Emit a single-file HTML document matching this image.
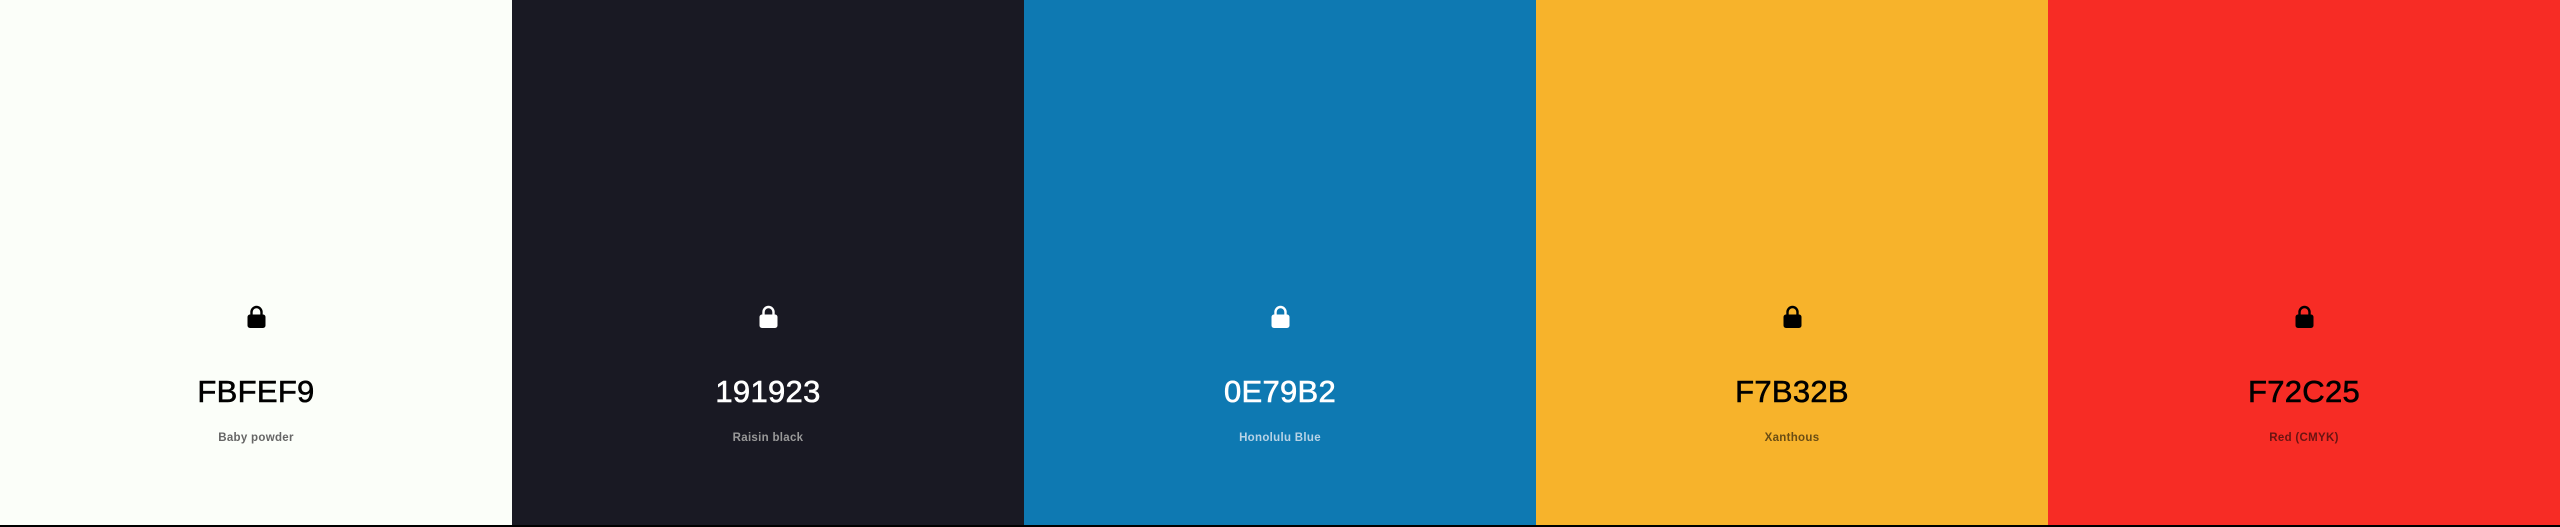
<!DOCTYPE html>
<html><head><style>
html,body{margin:0;padding:0;width:2560px;height:527px;overflow:hidden;background:#000;font-family:"Liberation Sans",sans-serif}
.wrap{display:flex;height:525px}
.c{width:512px;height:525px;position:relative}
.lock{position:absolute;left:246px;top:305px;width:21px;height:24px}
.hex{position:absolute;left:0;right:0;top:374px;text-align:center;font-size:31px;font-weight:normal;letter-spacing:0.3px;-webkit-text-stroke:0.6px currentColor}
.lab{position:absolute;left:0;right:0;top:432px;text-align:center;font-size:11.5px;font-weight:bold;letter-spacing:0.3px}
</style></head><body>
<div class="wrap">
<div class="c" style="background:#FBFEF9;color:#000">
<svg class="lock" viewBox="0 0 21 24"><path d="M5.5 10V7a5 5 0 0 1 10 0v3" fill="none" stroke="#000" stroke-width="2.4"/><rect x="1.5" y="9.5" width="18" height="13.5" rx="2.5" fill="#000"/></svg>
<div class="hex">FBFEF9</div><div class="lab" style="color:#666">Baby powder</div></div>
<div class="c" style="background:#191923;color:#fff">
<svg class="lock" viewBox="0 0 21 24"><path d="M5.5 10V7a5 5 0 0 1 10 0v3" fill="none" stroke="#fff" stroke-width="2.4"/><rect x="1.5" y="9.5" width="18" height="13.5" rx="2.5" fill="#fff"/></svg>
<div class="hex">191923</div><div class="lab" style="color:#999">Raisin black</div></div>
<div class="c" style="background:#0E79B2;color:#fff">
<svg class="lock" viewBox="0 0 21 24"><path d="M5.5 10V7a5 5 0 0 1 10 0v3" fill="none" stroke="#fff" stroke-width="2.4"/><rect x="1.5" y="9.5" width="18" height="13.5" rx="2.5" fill="#fff"/></svg>
<div class="hex">0E79B2</div><div class="lab" style="color:#b7d3e6">Honolulu Blue</div></div>
<div class="c" style="background:#F7B32B;color:#000">
<svg class="lock" viewBox="0 0 21 24"><path d="M5.5 10V7a5 5 0 0 1 10 0v3" fill="none" stroke="#000" stroke-width="2.4"/><rect x="1.5" y="9.5" width="18" height="13.5" rx="2.5" fill="#000"/></svg>
<div class="hex">F7B32B</div><div class="lab" style="color:#6a4d14">Xanthous</div></div>
<div class="c" style="background:#F72C25;color:#000">
<svg class="lock" viewBox="0 0 21 24"><path d="M5.5 10V7a5 5 0 0 1 10 0v3" fill="none" stroke="#000" stroke-width="2.4"/><rect x="1.5" y="9.5" width="18" height="13.5" rx="2.5" fill="#000"/></svg>
<div class="hex">F72C25</div><div class="lab" style="color:#6a1412">Red (CMYK)</div></div>
</div>
</body></html>
